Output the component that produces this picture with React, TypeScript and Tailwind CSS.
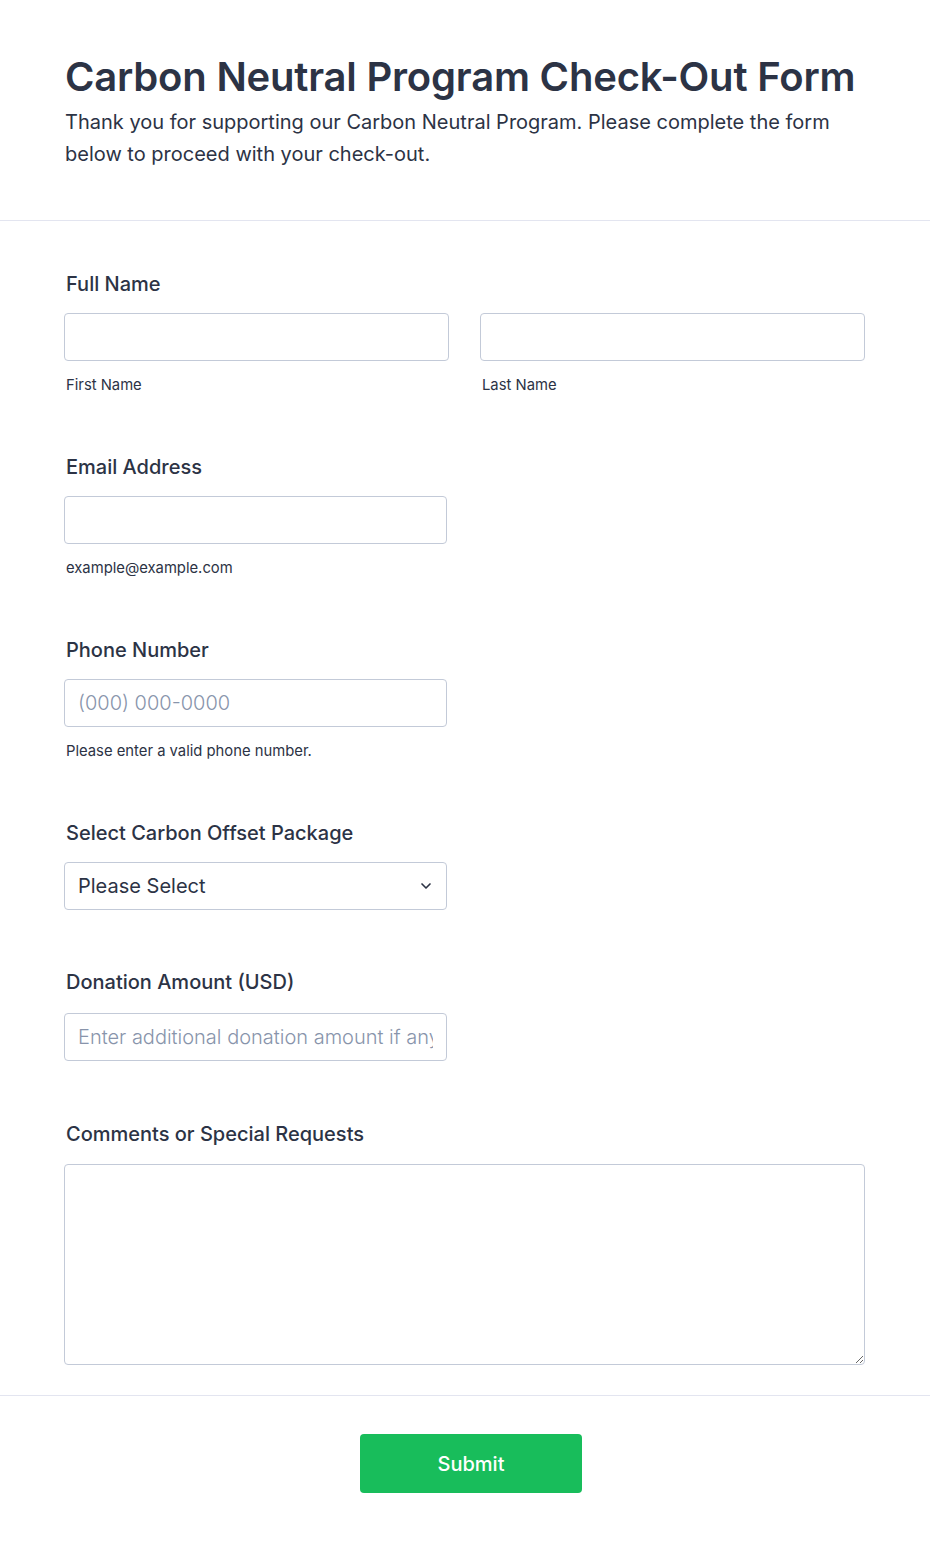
import { ChevronDown } from 'lucide-react';

const font = { fontFamily: 'Inter, "Noto Sans", sans-serif' };

// ─── Field shell ──────────────────────────────────────────────────────────────
function Field({ label, children }: { label: string; children: React.ReactNode }) {
  return (
    <div className="mb-[61px]">
      <label className="block ml-[2px] text-[20px] leading-[24px] font-medium text-[#2c3345]">{label}</label>
      <div className="mt-[17px]">{children}</div>
    </div>
  );
}

function Sub({ children }: { children: React.ReactNode }) {
  return <p className="mt-[15px] ml-[2px] text-[14.8px] leading-[18px] text-[#2c3345]">{children}</p>;
}

const inputCls =
  'block h-[48px] w-full rounded-[4px] border border-[#c3cad8] bg-white px-[13px] text-[20px] font-light text-[#2c3345] placeholder:text-[#8894ab] outline-none';

export default function App() {
  return (
    <div style={font} className="min-h-[1542px] bg-white text-[#2c3345]">
      {/* Header */}
      <header className="px-[65px] pt-[53px] pb-[50px] border-b border-[#e3e5f0]">
        <h1 className="text-[40px] leading-[48px] font-semibold tracking-[-0.2px] text-[#2c3345]">
          Carbon Neutral Program Check-Out Form
        </h1>
        <p className="mt-[5px] text-[20px] leading-[32px] text-[#2c3345]">
          Thank you for supporting our Carbon Neutral Program. Please complete the form below to proceed with your
          check-out.
        </p>
      </header>

      {/* Fields */}
      <main className="px-[64px] pt-[51px] pr-[65px]">
        <Field label="Full Name">
          <div className="grid grid-cols-2 gap-[31px]">
            <div>
              <input className={inputCls} />
              <Sub>First Name</Sub>
            </div>
            <div>
              <input className={inputCls} />
              <Sub>Last Name</Sub>
            </div>
          </div>
        </Field>

        <Field label="Email Address">
          <div className="w-[383px]">
            <input className={inputCls} />
            <Sub>example@example.com</Sub>
          </div>
        </Field>

        <Field label="Phone Number">
          <div className="w-[383px]">
            <input className={inputCls} placeholder="(000) 000-0000" />
            <Sub>Please enter a valid phone number.</Sub>
          </div>
        </Field>

        <div className="mb-[60px]">
          <label className="block ml-[2px] text-[20px] leading-[24px] font-medium">Select Carbon Offset Package</label>
          <div className="mt-[17px] w-[383px] h-[48px] rounded-[4px] border border-[#c3cad8] flex items-center justify-between pl-[13px] pr-[12px]">
            <span className="text-[20px]">Please Select</span>
            <ChevronDown size={16} strokeWidth={2.5} className="text-[#2c3345]" />
          </div>
        </div>

        <div className="mb-[61px]">
          <label className="block ml-[2px] text-[20px] leading-[24px] font-medium">Donation Amount (USD)</label>
          <div className="mt-[19px] w-[383px]">
            <input className={inputCls} placeholder="Enter additional donation amount if any" />
          </div>
        </div>

        <div>
          <label className="block ml-[2px] text-[20px] leading-[24px] font-medium">Comments or Special Requests</label>
          <textarea className="mt-[18px] block w-full h-[201px] rounded-[4px] border border-[#c3cad8] outline-none p-[12px] text-[16px]" />
        </div>
      </main>

      {/* Footer */}
      <footer className="mt-[30px] border-t border-[#e3e5f0] pt-[38px] pb-[50px] flex justify-center">
        <button className="w-[222px] h-[59px] rounded-[4px] bg-[#18bd5b] text-white text-[20px] font-medium ml-[12px]">
          Submit
        </button>
      </footer>
    </div>
  );
}
